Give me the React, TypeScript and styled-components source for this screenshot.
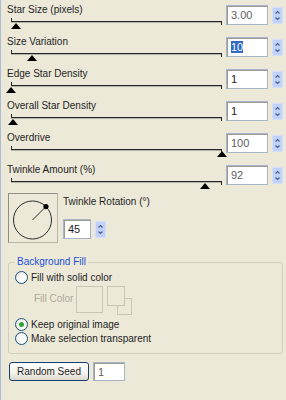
import React from "react";
import styled, { createGlobalStyle } from "styled-components";

const GlobalStyle = createGlobalStyle`
  html, body {
    margin: 0;
    padding: 0;
    background: #ece9d8;
  }
  body {
    font-family: "Liberation Sans", Arial, sans-serif;
    font-size: 10px;
    color: #1e1e1e;
  }
`;

const Panel = styled.div`
  width: 286px;
  height: 400px;
  box-sizing: border-box;
  background: #ece9d8;
  border-left: 1px solid #a9bbd9;
  padding: 0 3px 0 6px;
  display: flex;
  flex-direction: column;
  overflow: hidden;
`;

const SliderRow = styled.div`
  display: flex;
  height: 32px;
`;

const SliderCol = styled.div`
  width: 219px;
  display: flex;
  flex-direction: column;
`;

const Label = styled.div`
  margin-top: 4px;
  line-height: 12px;
  height: 12px;
  white-space: nowrap;
`;

const Track = styled.div`
  position: relative;
  margin-left: 4px;
  width: 211px;
  height: 14px;
  &::before {
    content: "";
    position: absolute;
    left: 0;
    right: 0;
    top: 5px;
    height: 1px;
    background: #262626;
    box-shadow: 0 1px 0 #b5b2a6;
  }
  &::after {
    content: "";
    position: absolute;
    left: 0;
    top: 2px;
    width: 1px;
    height: 4px;
    background: #262626;
  }
`;

const TrackEnd = styled.span`
  position: absolute;
  right: 0;
  top: 5px;
  width: 1px;
  height: 4px;
  background: #262626;
`;

const Thumb = styled.span`
  position: absolute;
  top: 7px;
  margin-left: -5px;
  width: 0;
  height: 0;
  border-left: 5px solid transparent;
  border-right: 5px solid transparent;
  border-bottom: 6px solid #000;
`;

const Spinner = styled.div<{ $top: number }>`
  display: flex;
  align-items: flex-start;
  gap: 4px;
  margin-top: ${(p) => p.$top}px;
`;

const TextBox = styled.div<{ $w: number; $dim?: boolean }>`
  box-sizing: border-box;
  width: ${(p) => p.$w}px;
  height: 20px;
  background: #fff;
  border: 1px solid #a7b5c6;
  box-shadow: inset 1px 1px 0 #9c9b94;
  padding: 3px 0 0 4px;
  line-height: 13px;
  font-size: 11px;
  color: ${(p) => (p.$dim ? "#5e5e5e" : "#1a1a1a")};
`;

const Selected = styled.span`
  background: #316ac5;
  color: #fff;
`;

const SpinButton = styled.div`
  box-sizing: border-box;
  width: 11px;
  height: 17px;
  margin-top: 2px;
  background: #c1d2fa;
  border: 1px solid #d3dffb;
  border-radius: 1px;
  display: flex;
  align-items: center;
  justify-content: center;
`;

const TwinkleRow = styled.div`
  display: flex;
  margin-top: 1px;
`;

const DialBox = styled.div`
  box-sizing: border-box;
  width: 50px;
  height: 50px;
  border: 1px solid #b9b6a8;
  border-top-color: #8f8e87;
  border-left-color: #8f8e87;
  margin-left: 1px;
`;

const TwinkleCol = styled.div`
  display: flex;
  flex-direction: column;
  margin-left: 5px;
`;

const TwinkleLabel = styled(Label)`
  margin-top: 3px;
`;

const Group = styled.fieldset`
  margin: 13px 0 0 1px;
  padding: 2px 6px 8px 6px;
  border: 1px solid #d0d0bf;
  border-radius: 3px;
  min-width: 0;
`;

const Legend = styled.legend`
  color: #1c4fd6;
  padding: 0 2px;
  margin-left: 0;
  line-height: 12px;
`;

const RadioRow = styled.div<{ $top?: number }>`
  display: flex;
  align-items: center;
  height: 14px;
  gap: 3px;
  margin-top: ${(p) => p.$top ?? 0}px;
  white-space: nowrap;
`;

const RadioCircle = styled.span<{ $on?: boolean }>`
  box-sizing: border-box;
  width: 13px;
  height: 13px;
  border-radius: 50%;
  border: 1px solid #1d5281;
  background: radial-gradient(circle at 60% 60%, #ffffff 30%, #dcdcd6 100%);
  display: flex;
  align-items: center;
  justify-content: center;
  &::after {
    content: "";
    display: ${(p) => (p.$on ? "block" : "none")};
    width: 5px;
    height: 5px;
    border-radius: 50%;
    background: #2fa52f;
  }
`;

const FillRow = styled.div`
  display: flex;
  align-items: flex-start;
  height: 28px;
  margin-top: 2px;
`;

const FillLabel = styled.span`
  color: #aca899;
  margin: 7px 0 0 19px;
  width: 42px;
  line-height: 12px;
`;

const Swatch = styled.div`
  box-sizing: border-box;
  width: 27px;
  height: 27px;
  border: 1px solid #c9c6b6;
`;

const BottomRow = styled.div`
  display: flex;
  gap: 4px;
  margin: 8px 0 0 2px;
`;

const Button = styled.div`
  box-sizing: border-box;
  width: 80px;
  height: 19px;
  border: 1px solid #17406e;
  border-radius: 3px;
  background: linear-gradient(#ffffff, #f3f2ec 60%, #dcd8cc);
  text-align: center;
  line-height: 17px;
  font-size: 10px;
`;

const Chevrons = () => (
  <svg width="7" height="11" viewBox="0 0 7 11">
    <path d="M1.5 3.5 L3.5 1.5 L5.5 3.5" fill="none" stroke="#4d6185" strokeWidth="1.2" />
    <path d="M1.5 7.5 L3.5 9.5 L5.5 7.5" fill="none" stroke="#4d6185" strokeWidth="1.2" />
  </svg>
);

const Dial = ({ angle }: { angle: number }) => {
  const cx = 23.5;
  const cy = 26;
  const r = 19;
  const a = (angle * Math.PI) / 180;
  const dx = cx + r * Math.cos(a);
  const dy = cy - r * Math.sin(a);
  return (
    <svg width="48" height="48" viewBox="0 0 48 48">
      <circle cx={cx} cy={cy} r={r} fill="none" stroke="#2b2b2b" strokeWidth="1" />
      <line x1={cx} y1={cy} x2={dx} y2={dy} stroke="#2b2b2b" strokeWidth="1" />
      <circle cx={dx} cy={dy} r="2.6" fill="#000" />
    </svg>
  );
};

type SliderDef = { label: string; value: React.ReactNode; pos: number; dim?: boolean };

const sliders: SliderDef[] = [
  { label: "Star Size (pixels)", value: "3.00", pos: 2.4, dim: true },
  { label: "Size Variation", value: <Selected>10</Selected>, pos: 10 },
  { label: "Edge Star Density", value: "1", pos: 0 },
  { label: "Overall Star Density", value: "1", pos: 1 },
  { label: "Overdrive", value: "100", pos: 100, dim: true },
  { label: "Twinkle Amount (%)", value: "92", pos: 92, dim: true },
];

export default function App() {
  return (
    <>
      <GlobalStyle />
      <Panel>
        {sliders.map((s) => (
          <SliderRow key={s.label}>
            <SliderCol>
              <Label>{s.label}</Label>
              <Track>
                <TrackEnd />
                <Thumb style={{ left: `${s.pos}%` }} />
              </Track>
            </SliderCol>
            <Spinner $top={5}>
              <TextBox $w={42} $dim={s.dim}>
                {s.value}
              </TextBox>
              <SpinButton>
                <Chevrons />
              </SpinButton>
            </Spinner>
          </SliderRow>
        ))}
        <TwinkleRow>
          <DialBox>
            <Dial angle={45} />
          </DialBox>
          <TwinkleCol>
            <TwinkleLabel>Twinkle Rotation (°)</TwinkleLabel>
            <Spinner $top={11}>
              <TextBox $w={28}>45</TextBox>
              <SpinButton>
                <Chevrons />
              </SpinButton>
            </Spinner>
          </TwinkleCol>
        </TwinkleRow>
        <Group>
          <Legend>Background Fill</Legend>
          <RadioRow>
            <RadioCircle />
            <span>Fill with solid color</span>
          </RadioRow>
          <FillRow>
            <FillLabel>Fill Color</FillLabel>
            <Swatch />
            <svg width="26" height="30" viewBox="0 0 26 30" style={{ marginLeft: 4 }}>
              <rect x="10.5" y="12.5" width="14" height="16" fill="none" stroke="#c9c6b6" />
              <rect x="0.5" y="0.5" width="17" height="19" fill="#ece9d8" stroke="#c9c6b6" />
            </svg>
          </FillRow>
          <RadioRow $top={3}>
            <RadioCircle $on />
            <span>Keep original image</span>
          </RadioRow>
          <RadioRow>
            <RadioCircle />
            <span>Make selection transparent</span>
          </RadioRow>
        </Group>
        <BottomRow>
          <Button>Random Seed</Button>
          <TextBox $w={32} $dim style={{ height: 19 }}>
            1
          </TextBox>
        </BottomRow>
      </Panel>
    </>
  );
}
